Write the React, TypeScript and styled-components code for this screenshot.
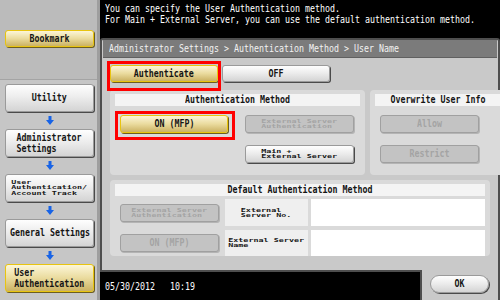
import React from "react";
import styled, { createGlobalStyle, css } from "styled-components";

const GlobalStyle = createGlobalStyle`
  html, body {
    margin: 0;
    padding: 0;
    background: #000;
  }
  body {
    font-family: "DejaVu Sans Mono", "Liberation Mono", monospace;
  }
`;

type Tone = "plain" | "active" | "off";

const tones = {
  plain: css`
    background: linear-gradient(#fefefe 0%, #ededed 45%, #d4d4d4 100%);
    border: 1px solid #9a9a9a;
    box-shadow: 1px 1px 0 #4a4a4a;
    color: #151515;
  `,
  active: css`
    background: linear-gradient(#fcf6d8 0%, #eadb9e 50%, #cbb263 100%);
    border: 1px solid #e8c410;
    box-shadow: 1px 1px 0 #6d5e20;
    color: #151515;
  `,
  off: css`
    background: #c3c3c3;
    border: 1px solid #a0a0a0;
    box-shadow: 1px 1px 0 #b4b4b4;
    color: #a4a4a4;
  `,
};

function ArrowDown() {
  return (
    <svg width="8" height="9" viewBox="0 0 8 9">
      <path d="M2.5 0h3v4H8L4 9 0 4h2.5z" fill="#1763e6" />
    </svg>
  );
}

export default function App() {
  return (
    <>
      <GlobalStyle />
      <Screen>
        <Sidebar>
          <SideTop>
            <Button $tone="active" $h={17}>
              <Narrow>Bookmark</Narrow>
            </Button>
          </SideTop>
          <SideNav>
            <Button $h={28}>
              <Narrow>Utility</Narrow>
            </Button>
            <Step>
              <ArrowDown />
            </Step>
            <Button $h={28}>
              <Narrow $lines>
                Administrator
                <br />
                Settings
              </Narrow>
            </Button>
            <Step>
              <ArrowDown />
            </Step>
            <Button $h={28}>
              <Tiny>
                User
                <br />
                Authentication/
                <br />
                Account Track
              </Tiny>
            </Button>
            <Step>
              <ArrowDown />
            </Step>
            <Button $h={28}>
              <Narrow>General Settings</Narrow>
            </Button>
            <Step>
              <ArrowDown />
            </Step>
            <Button $tone="active" $h={28}>
              <Narrow $lines>
                User
                <br />
                Authentication
              </Narrow>
            </Button>
          </SideNav>
        </Sidebar>

        <Main>
          <Message>
            <Narrow $left $light>
              You can specify the User Authentication method.
            </Narrow>
            <Narrow $left $light>
              For Main + External Server, you can use the default authentication method.
            </Narrow>
          </Message>

          <Panel>
            <TitleBar>
              <Narrow $left $light>
                Administrator Settings &gt; Authentication Method &gt; User Name
              </Narrow>
            </TitleBar>
            <PanelBody>
              <ToggleRow>
                <Highlight $t={4} $r={3} $b={9} $l={3}>
                  <Button $tone="active" $w={108} $h={17}>
                    <Narrow>Authenticate</Narrow>
                  </Button>
                </Highlight>
                <Button $w={108} $h={17}>
                  <Narrow>OFF</Narrow>
                </Button>
              </ToggleRow>

              <GroupRow>
                <Group $w={255}>
                  <GroupHead>
                    <Narrow>Authentication Method</Narrow>
                  </GroupHead>
                  <MethodGrid>
                    <Highlight $t={4} $r={7} $b={7} $l={5}>
                      <Button $tone="active" $w={108} $h={18}>
                        <Narrow>ON (MFP)</Narrow>
                      </Button>
                    </Highlight>
                    <Button $tone="off" $w={109} $h={18}>
                      <Tiny>
                        External Server
                        <br />
                        Authentication
                      </Tiny>
                    </Button>
                    <span />
                    <Button $w={109} $h={18}>
                      <Tiny>
                        Main +
                        <br />
                        External Server
                      </Tiny>
                    </Button>
                  </MethodGrid>
                </Group>
                <Group>
                  <GroupHead>
                    <Narrow>Overwrite User Info</Narrow>
                  </GroupHead>
                  <OverwriteList>
                    <Button $tone="off" $w={99} $h={18}>
                      <Narrow>Allow</Narrow>
                    </Button>
                    <Button $tone="off" $w={99} $h={18}>
                      <Narrow>Restrict</Narrow>
                    </Button>
                  </OverwriteList>
                </Group>
              </GroupRow>

              <Group>
                <GroupHead>
                  <Narrow>Default Authentication Method</Narrow>
                </GroupHead>
                <DefaultGrid>
                  <ButtonCell>
                    <Button $tone="off" $w={99} $h={18}>
                      <Tiny>
                        External Server
                        <br />
                        Authentication
                      </Tiny>
                    </Button>
                  </ButtonCell>
                  <LabelCell>
                    <Tiny>
                      External
                      <br />
                      Server No.
                    </Tiny>
                  </LabelCell>
                  <Field />
                  <ButtonCell>
                    <Button $tone="off" $w={99} $h={18}>
                      <Narrow>ON (MFP)</Narrow>
                    </Button>
                  </ButtonCell>
                  <LabelCell>
                    <Tiny>
                      External Server
                      <br />
                      Name
                    </Tiny>
                  </LabelCell>
                  <Field />
                </DefaultGrid>
              </Group>
            </PanelBody>
          </Panel>

          <Footer>
            <Clock>
              <Narrow $left $light>
                05/30/2012&nbsp;&nbsp;&nbsp;10:19
              </Narrow>
            </Clock>
            <OkTab>
              <Button $w={59} $h={18} $pill>
                <Narrow>OK</Narrow>
              </Button>
            </OkTab>
          </Footer>
        </Main>
      </Screen>
    </>
  );
}

const Screen = styled.div`
  width: 500px;
  height: 300px;
  display: flex;
  overflow: hidden;
  background: #000;
`;

const Narrow = styled.span<{ $left?: boolean; $lines?: boolean; $light?: boolean }>`
  display: inline-block;
  white-space: nowrap;
  font-size: 11px;
  line-height: ${({ $lines }) => ($lines ? "11px" : "12px")};
  font-weight: ${({ $light }) => ($light ? "normal" : "bold")};
  text-align: left;
  transform: scaleX(0.755);
  transform-origin: ${({ $left }) => ($left ? "left center" : "center")};
`;

const Tiny = styled.span`
  display: inline-block;
  white-space: nowrap;
  font-size: 8px;
  line-height: 7.8px;
  font-weight: bold;
  text-align: left;
  transform: scaleX(1.05) scaleY(0.7);
`;

const Button = styled.div<{ $tone?: Tone; $w?: number; $h?: number; $pill?: boolean }>`
  box-sizing: border-box;
  flex: none;
  width: ${({ $w }) => ($w ? `${$w}px` : "auto")};
  height: ${({ $h }) => $h ?? 18}px;
  display: flex;
  align-items: center;
  justify-content: center;
  overflow: visible;
  border-radius: ${({ $pill }) => ($pill ? "9px" : "3px")};
  ${({ $tone }) => tones[$tone ?? "plain"]}
`;

const Highlight = styled.div<{ $t: number; $r: number; $b: number; $l: number }>`
  position: relative;
  flex: none;

  &::after {
    content: "";
    position: absolute;
    top: -${({ $t }) => $t}px;
    right: -${({ $r }) => $r}px;
    bottom: -${({ $b }) => $b}px;
    left: -${({ $l }) => $l}px;
    border: 3px solid #f00;
    pointer-events: none;
  }
`;

const Sidebar = styled.aside`
  width: 100px;
  flex: none;
  box-sizing: border-box;
  display: flex;
  flex-direction: column;
  background: #c6c6c6;
  border-right: 3px solid #9e9e9e;
`;

const SideTop = styled.div`
  height: 80px;
  box-sizing: border-box;
  padding: 30px 3px 0 5px;
  background: #bbbbbb;
  border-bottom: 1px solid #a4a4a4;
`;

const SideNav = styled.nav`
  display: flex;
  flex-direction: column;
  padding: 4px 3px 0 5px;
`;

const Step = styled.div`
  height: 17px;
  display: flex;
  align-items: center;
  justify-content: center;
`;

const Main = styled.main`
  flex: 1;
  display: flex;
  flex-direction: column;
  min-width: 0;
`;

const Message = styled.div`
  height: 38px;
  box-sizing: border-box;
  padding: 3px 5px 0;
  display: flex;
  flex-direction: column;
  color: #fff;

  & > span {
    line-height: 11px;
  }
`;

const Panel = styled.section`
  flex: 1;
  display: flex;
  flex-direction: column;
  background: #c9c9c9;
  border: 2px solid #4e4e4e;
  border-radius: 3px 3px 0 0;
`;

const TitleBar = styled.div`
  height: 18px;
  box-sizing: border-box;
  margin: 0 1px;
  padding-left: 6px;
  display: flex;
  align-items: center;
  background: #7b7b7b;
  border-bottom: 1px solid #606060;
  color: #f2f2f2;
`;

const PanelBody = styled.div`
  display: flex;
  flex-direction: column;
  padding: 7px 8px 0;
`;

const ToggleRow = styled.div`
  display: flex;
  gap: 4px;
  margin-bottom: 8px;
`;

const GroupRow = styled.div`
  display: flex;
  gap: 5px;
  margin-bottom: 5px;
`;

const Group = styled.div<{ $w?: number }>`
  box-sizing: border-box;
  height: 85px;
  ${({ $w }) => ($w ? `width: ${$w}px; flex: none;` : "flex: 1;")}
  padding: 4px 5px 0;
  display: flex;
  flex-direction: column;
  background: #dadada;
  border-radius: 4px;
`;

const GroupHead = styled.div`
  height: 12px;
  display: flex;
  align-items: center;
  justify-content: center;
  background: #f4f4f4;
  color: #151515;
`;

const MethodGrid = styled.div`
  display: grid;
  grid-template-columns: 108px 109px;
  grid-template-rows: 18px 18px;
  column-gap: 17px;
  row-gap: 12px;
  padding: 9px 0 0 5px;
`;

const OverwriteList = styled.div`
  display: flex;
  flex-direction: column;
  gap: 12px;
  padding: 9px 0 0 5px;
`;

const DefaultGrid = styled.div`
  display: grid;
  grid-template-columns: 107px 83px 1fr;
  grid-template-rows: 27px 26px;
  column-gap: 3px;
  row-gap: 4px;
  padding-top: 3px;
`;

const ButtonCell = styled.div`
  display: flex;
  align-items: center;
  padding-left: 5px;
`;

const LabelCell = styled.div`
  display: flex;
  align-items: center;
  justify-content: center;
  background: #efefef;
  color: #151515;
`;

const Field = styled.div`
  background: #fff;
`;

const Footer = styled.div`
  height: 30px;
  margin-top: -2px;
  display: flex;
`;

const Clock = styled.div`
  flex: 1;
  display: flex;
  align-items: center;
  padding: 2px 0 0 5px;
  background: #000;
  border-top: 2px solid #4e4e4e;
  color: #fff;
`;

const OkTab = styled.div`
  width: 80px;
  box-sizing: border-box;
  display: flex;
  align-items: flex-start;
  padding: 5px 0 0 8px;
  background: #c9c9c9;
  border-left: 2px solid #4e4e4e;
  border-right: 2px solid #4e4e4e;
`;
